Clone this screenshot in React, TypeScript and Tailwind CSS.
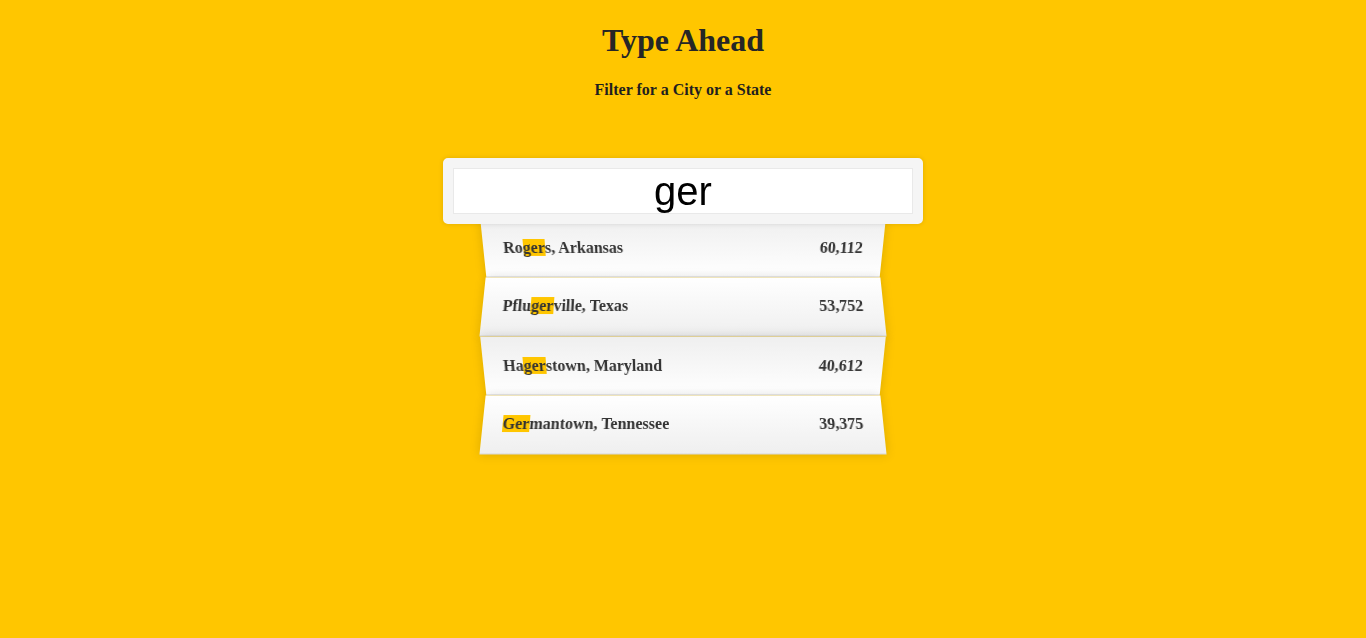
const cities = [
  { pre: "Ro", hl: "ger", post: "s, Arkansas", pop: "60,112" },
  { pre: "Pflu", hl: "ger", post: "ville, Texas", pop: "53,752" },
  { pre: "Ha", hl: "ger", post: "stown, Maryland", pop: "40,612" },
  { pre: "", hl: "Ger", post: "mantown, Tennessee", pop: "39,375" },
]

export default function App() {
  return (
    <div className="min-h-[638px] bg-[#ffc600] text-[#222] [font-family:'Liberation_Serif','Times_New_Roman',serif] overflow-hidden">
      <h1 className="text-center text-[32px] font-bold leading-[37px] pt-[22px] text-[#262626]">Type Ahead</h1>
      <h4 className="text-center text-[16px] font-bold leading-[18px] mt-[22px] text-[#1f1f1f]">Filter for a City or a State</h4>

      <form className="max-w-[400px] mx-auto mt-[49px] mb-[50px]" onSubmit={(e) => e.preventDefault()}>
        <input
          type="text"
          defaultValue="ger"
          className="relative top-[10px] left-[-10%] z-10 block w-[120%] h-[66px] m-0 p-0 text-center text-[40px] text-black outline-none border-[10px] border-[#f5f5f5] rounded-[5px] bg-white [font-family:'Liberation_Sans',Arial,sans-serif] shadow-[0_0_5px_rgba(0,0,0,0.12),inset_0_0_0_1px_#e9e9e9]"
        />
        <ul className="relative mt-[2px] p-0">
          {cities.map((c, i) => (
            <li
              key={i}
              className={
                i % 2 === 0
                  ? "flex justify-between items-center list-none m-0 px-5 py-5 text-[16px] leading-[18px] font-bold text-[#333] border-b border-[#d8d8d8] shadow-[0_0_10px_rgba(0,0,0,0.14)] bg-gradient-to-t from-white to-[#efefef] [transform:perspective(100px)_rotateX(-3deg)_translateY(3px)]"
                  : "flex justify-between items-center list-none m-0 px-5 py-5 text-[16px] leading-[18px] font-bold text-[#333] border-b border-[#d8d8d8] shadow-[0_0_10px_rgba(0,0,0,0.14)] bg-gradient-to-b from-white to-[#efefef] [transform:perspective(100px)_rotateX(3deg)_translateY(2px)_scale(1.001)]"
              }
            >
              <span>
                {c.pre}
                <span className="bg-[#ffc600]">{c.hl}</span>
                {c.post}
              </span>
              <span>{c.pop}</span>
            </li>
          ))}
        </ul>
      </form>
    </div>
  )
}
